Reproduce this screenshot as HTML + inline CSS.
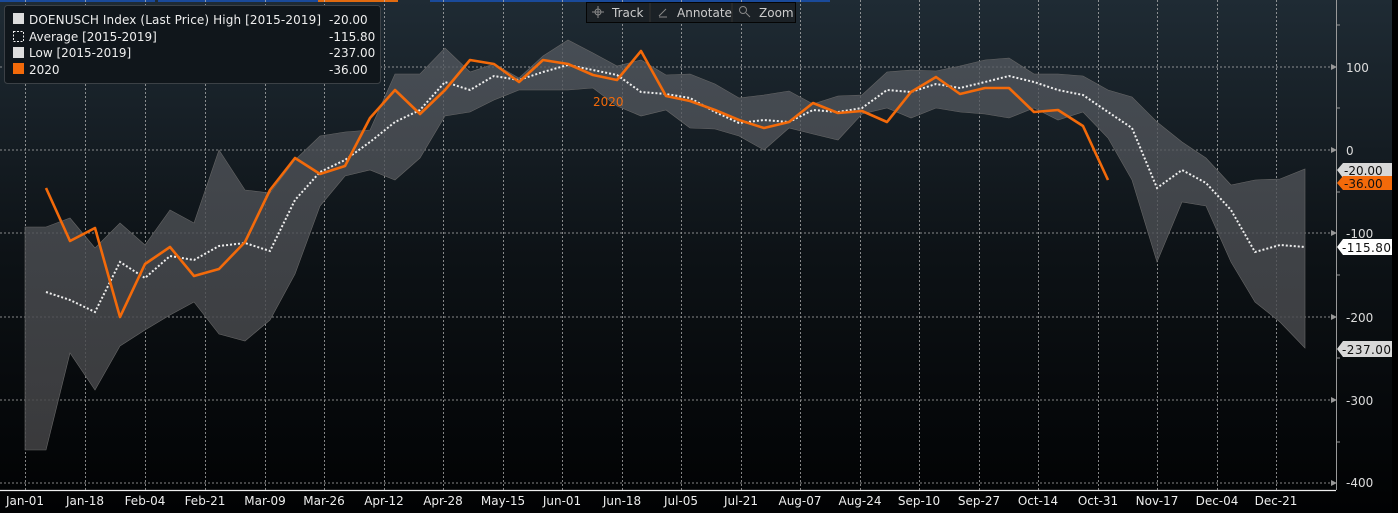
<!DOCTYPE html>
<html><head><meta charset="utf-8"><style>
html,body{margin:0;padding:0;background:#000;}
body{width:1398px;height:513px;overflow:hidden;position:relative;font-family:"DejaVu Sans",sans-serif;}
svg{position:absolute;left:0;top:0;}
</style></head><body>
<svg width="1398" height="513" viewBox="0 0 1398 513" font-family="DejaVu Sans, sans-serif">
<defs>
<linearGradient id="bg" x1="0" y1="0" x2="0" y2="1">
<stop offset="0" stop-color="#1f2b34"/><stop offset="0.5" stop-color="#0d1216"/><stop offset="1" stop-color="#010203"/>
</linearGradient>
<linearGradient id="band" x1="0" y1="0" x2="0" y2="1">
<stop offset="0" stop-color="#555a61" stop-opacity="0.75"/><stop offset="1" stop-color="#434345" stop-opacity="0.85"/>
</linearGradient>
</defs>
<rect x="0" y="0" width="1392" height="513" fill="url(#bg)"/>
<rect x="1392" y="0" width="6" height="513" fill="#000"/>
<rect x="0" y="0" width="155" height="2" fill="#1a4a9a"/>
<rect x="158" y="0" width="160" height="2" fill="#1a4a9a"/>
<rect x="318" y="0" width="80" height="2" fill="#e06a10"/>
<rect x="430" y="0" width="400" height="2" fill="#1a4a9a"/>
<g stroke="#bbb" stroke-width="1" stroke-dasharray="2,2" opacity="0.7">
<line x1="0" y1="67" x2="1336" y2="67"/><line x1="0" y1="150" x2="1336" y2="150"/><line x1="0" y1="233" x2="1336" y2="233"/><line x1="0" y1="317" x2="1336" y2="317"/><line x1="0" y1="400" x2="1336" y2="400"/><line x1="0" y1="483" x2="1336" y2="483"/>
<line x1="25.5" y1="0" x2="25.5" y2="490"/><line x1="85.5" y1="0" x2="85.5" y2="490"/><line x1="145.5" y1="0" x2="145.5" y2="490"/><line x1="205.5" y1="0" x2="205.5" y2="490"/><line x1="265.5" y1="0" x2="265.5" y2="490"/><line x1="324.5" y1="0" x2="324.5" y2="490"/><line x1="384.5" y1="0" x2="384.5" y2="490"/><line x1="443.5" y1="0" x2="443.5" y2="490"/><line x1="503.5" y1="0" x2="503.5" y2="490"/><line x1="562.5" y1="0" x2="562.5" y2="490"/><line x1="622.5" y1="0" x2="622.5" y2="490"/><line x1="681.5" y1="0" x2="681.5" y2="490"/><line x1="741.5" y1="0" x2="741.5" y2="490"/><line x1="800.5" y1="0" x2="800.5" y2="490"/><line x1="860.5" y1="0" x2="860.5" y2="490"/><line x1="919.5" y1="0" x2="919.5" y2="490"/><line x1="979.5" y1="0" x2="979.5" y2="490"/><line x1="1038.5" y1="0" x2="1038.5" y2="490"/><line x1="1098.5" y1="0" x2="1098.5" y2="490"/><line x1="1157.5" y1="0" x2="1157.5" y2="490"/><line x1="1217.5" y1="0" x2="1217.5" y2="490"/><line x1="1276.5" y1="0" x2="1276.5" y2="490"/>
</g>
<polygon fill="url(#band)" stroke="#666" stroke-width="0.6" points="25,227 46,227 70,218 95,248 120,223 145,245 170,210 194,223 219,150 245,190 270,193 295,160 320,136 345,132 370,130 395,74 420,74 445,48 470,72 494,64 519,78 543,56 568,40 593,53 617,66 641,60 666,75 690,74 715,84 739,98 764,95 789,91 813,104 838,96 862,95 887,72 911,70 936,71 960,66 985,60 1009,58 1034,74 1058,74 1083,76 1108,90 1132,97 1157,122 1182,142 1206,158 1231,185 1255,180 1280,179 1305,169 1305,348 1280,322 1255,302 1231,262 1206,206 1182,202 1157,262 1132,180 1108,138 1083,112 1058,120 1034,108 1009,118 985,114 960,112 936,108 911,118 887,108 862,114 838,140 813,134 789,128 764,150 739,136 715,129 690,128 666,110 641,116 617,106 593,88 568,90 543,90 519,90 494,100 470,112 445,116 420,158 395,180 370,170 345,176 320,206 295,274 270,320 245,341 219,334 194,302 170,315 145,330 120,346 95,390 70,353 46,450 25,450"/>
<polyline fill="none" stroke="#eee" stroke-width="2" stroke-dasharray="2,2" points="46,292 70,300 95,312 120,262 145,278 170,256 194,260 219,246 245,243 270,251 295,200 320,172 345,160 370,142 395,122 420,110 445,82 470,90 494,76 519,80 543,72 568,65 593,70 617,75 641,92 666,94 690,98 715,112 739,123 764,120 789,122 813,110 838,112 862,108 887,90 911,92 936,84 960,88 985,82 1009,76 1034,82 1058,90 1083,95 1108,112 1132,128 1157,188 1182,170 1206,183 1231,210 1255,252 1280,245 1305,247"/>
<polyline fill="none" stroke="#f36a0a" stroke-width="2.6" stroke-linejoin="round" points="46,188 70,241 95,228 120,317 145,264 170,247 194,276 219,269 245,242 270,190 295,158 320,174 345,166 370,118 395,90 420,114 445,90 470,60 494,64 519,82 543,60 568,64 593,75 617,80 641,51 666,96 690,101 715,110 739,120 764,128 789,122 813,103 838,113 862,111 887,122 911,92 936,77 960,94 985,88 1009,88 1034,112 1058,110 1083,126 1108,180"/>
<text x="593" y="106" fill="#f36a0a" font-size="12">2020</text>
<line x1="0" y1="490.5" x2="1336" y2="490.5" stroke="#eee" stroke-width="1.2"/>
<line x1="1336.5" y1="0" x2="1336.5" y2="490" stroke="#999" stroke-width="1"/>
<g fill="#999"><path d="M1331,64 l6,3 l-6,3z"/><path d="M1331,147 l6,3 l-6,3z"/><path d="M1331,230 l6,3 l-6,3z"/><path d="M1331,314 l6,3 l-6,3z"/><path d="M1331,397 l6,3 l-6,3z"/><path d="M1331,480 l6,3 l-6,3z"/></g>
<g stroke="#999"><line x1="1336" y1="25" x2="1340" y2="25"/><line x1="1336" y1="108" x2="1340" y2="108"/><line x1="1336" y1="192" x2="1340" y2="192"/><line x1="1336" y1="275" x2="1340" y2="275"/><line x1="1336" y1="358" x2="1340" y2="358"/><line x1="1336" y1="442" x2="1340" y2="442"/></g>
<g fill="#ddd" font-size="12">
<text x="1346" y="72">100</text><text x="1346" y="155">0</text><text x="1346" y="238">-100</text><text x="1346" y="322">-200</text><text x="1346" y="405">-300</text><text x="1346" y="487">-400</text>
</g>
<path d="M1337,170 l6,-7 h49 v15 h-49z" fill="#d8d8d8"/><text x="1344" y="175" font-size="12" fill="#111">-20.00</text>
<path d="M1337,183 l6,-7 h49 v14 h-49z" fill="#f36a0a"/><text x="1344" y="188" font-size="12" fill="#111">-36.00</text>
<path d="M1337,247 l6,-8 h49 v16 h-49z" fill="#fff"/><text x="1342" y="252" font-size="12" fill="#111" textLength="49">-115.80</text>
<path d="M1337,349 l6,-8 h49 v16 h-49z" fill="#d8d8d8"/><text x="1342" y="354" font-size="12" fill="#111" textLength="49">-237.00</text>
<g fill="#eee" font-size="12" text-anchor="middle">
<text x="25" y="505">Jan-01</text><text x="85" y="505">Jan-18</text><text x="145" y="505">Feb-04</text><text x="205" y="505">Feb-21</text><text x="265" y="505">Mar-09</text><text x="324" y="505">Mar-26</text><text x="384" y="505">Apr-12</text><text x="443" y="505">Apr-28</text><text x="503" y="505">May-15</text><text x="562" y="505">Jun-01</text><text x="622" y="505">Jun-18</text><text x="681" y="505">Jul-05</text><text x="741" y="505">Jul-21</text><text x="800" y="505">Aug-07</text><text x="860" y="505">Aug-24</text><text x="919" y="505">Sep-10</text><text x="979" y="505">Sep-27</text><text x="1038" y="505">Oct-14</text><text x="1098" y="505">Oct-31</text><text x="1157" y="505">Nov-17</text><text x="1217" y="505">Dec-04</text><text x="1276" y="505">Dec-21</text>
</g>
<rect x="4.5" y="5.5" width="376" height="78" rx="3" fill="#10161b" stroke="#3c4146"/>
<rect x="13" y="13" width="11" height="11" fill="#ddd"/>
<rect x="13.5" y="31.5" width="10" height="10" fill="none" stroke="#eee" stroke-dasharray="2,1.5"/>
<rect x="13" y="47" width="11" height="11" fill="#ddd"/>
<rect x="13" y="63" width="11" height="11" fill="#f36a0a"/>
<g fill="#eee" font-size="12">
<text x="29" y="24" textLength="292">DOENUSCH Index (Last Price) High [2015-2019]</text>
<text x="29" y="41">Average [2015-2019]</text>
<text x="29" y="57">Low [2015-2019]</text>
<text x="29" y="74">2020</text>
<text x="329" y="24">-20.00</text><text x="329" y="41">-115.80</text><text x="329" y="57">-237.00</text><text x="329" y="74">-36.00</text>
</g>
<rect x="586.5" y="2.5" width="209" height="20" fill="#1b2126" stroke="#050505"/>
<line x1="650" y1="3" x2="650" y2="22" stroke="#333"/><line x1="732" y1="3" x2="732" y2="22" stroke="#333"/>
<g stroke="#888" fill="none" stroke-width="1"><circle cx="598" cy="12" r="3"/><line x1="592" y1="12" x2="604" y2="12"/><line x1="598" y1="6" x2="598" y2="18"/>
<line x1="659" y1="16" x2="666" y2="9"/><line x1="659" y1="17" x2="667" y2="17"/>
<circle cx="743" cy="10" r="3.5"/><line x1="746" y1="13" x2="750" y2="17"/></g>
<g fill="#ccc" font-size="12"><text x="612" y="17">Track</text><text x="677" y="17">Annotate</text><text x="759" y="17">Zoom</text></g>
</svg>
</body></html>
